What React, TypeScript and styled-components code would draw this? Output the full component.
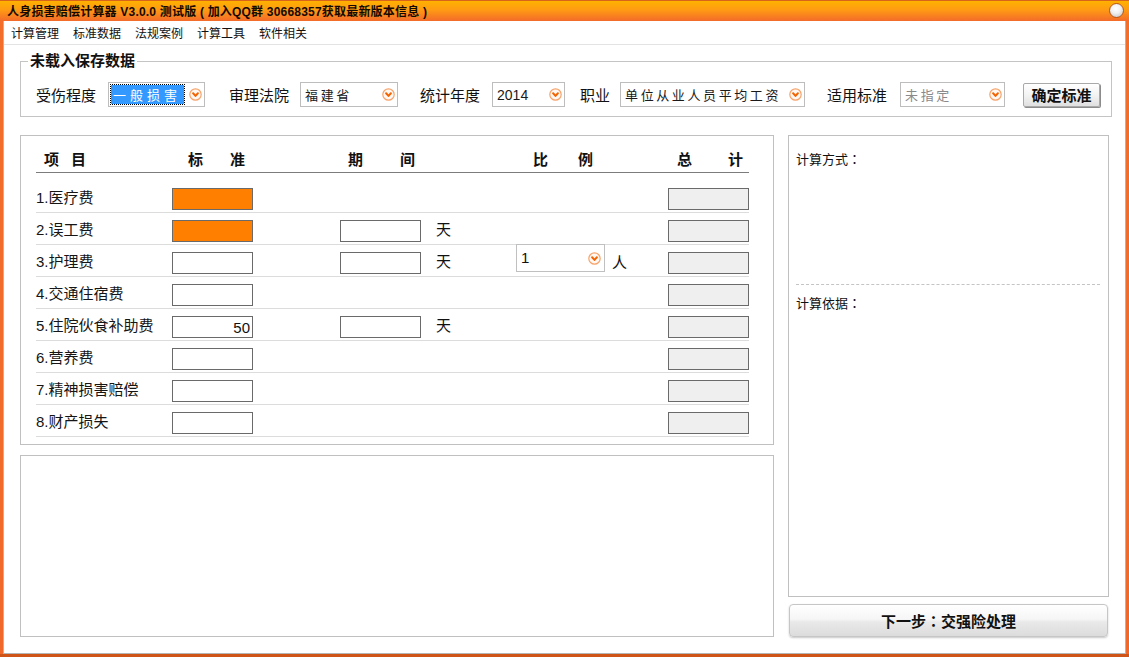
import React from 'react';
import styled, { createGlobalStyle } from 'styled-components';

const GlobalStyle = createGlobalStyle`
  html, body {
    margin: 0;
    padding: 0;
    background: #fff;
  }
  body {
    font-family: 'Liberation Sans', 'Noto Sans CJK SC', sans-serif;
    color: #111;
  }
  * {
    box-sizing: border-box;
  }
`;

const Window = styled.div`
  width: 1129px;
  height: 657px;
  display: flex;
  flex-direction: column;
  overflow: hidden;
  background: linear-gradient(
    to bottom,
    #f26e2a 0,
    #f0692a calc(100% - 3px),
    #cf5418 calc(100% - 3px)
  );
`;

const TitleBar = styled.header`
  flex: none;
  height: 21px;
  display: flex;
  align-items: center;
  justify-content: space-between;
  padding: 0 5px 0 7px;
  background: linear-gradient(
    to bottom,
    #d8641c 0,
    #d8641c 1px,
    #ffb100 1px,
    #ff9c12 45%,
    #f36b2b 100%
  );
`;

const Title = styled.h1`
  margin: 0;
  padding-top: 3px;
  font-size: 12px;
  line-height: 12px;
  font-weight: bold;
  letter-spacing: 0.2px;
  color: #140a00;
  white-space: nowrap;
`;

const CloseButton = styled.span`
  width: 15px;
  height: 15px;
  border-radius: 50%;
  border: 1px solid #b9561a;
  background: radial-gradient(circle at 45% 35%, #ffffff 0, #f2f2f2 40%, #bdbdbd 100%);
`;

const Client = styled.div`
  flex: 1;
  min-height: 0;
  margin: 0 3px 3px 3px;
  background: #fff;
  border: 1px solid #b4b4b4;
  border-top: none;
  display: flex;
  flex-direction: column;
`;

const MenuBar = styled.nav`
  flex: none;
  height: 24px;
  display: flex;
  align-items: center;
  gap: 14px;
  padding: 0 0 0 7px;
  border-bottom: 1px solid #e3e3e3;
`;

const MenuItem = styled.span`
  font-size: 12px;
  color: #111;
`;

const Content = styled.main`
  flex: 1;
  min-height: 0;
  display: flex;
  flex-direction: column;
  padding: 7px 13px 16px 16px;
`;

const GroupBox = styled.fieldset`
  margin: 0;
  min-width: 0;
  padding: 12px 0 9px 15px;
  border: 1px solid #c4c4c4;
`;

const Legend = styled.legend`
  margin-left: -8px;
  padding: 0 2px;
  font-size: 15px;
  line-height: 18px;
  font-weight: bold;
`;

const FilterRow = styled.div`
  display: flex;
  align-items: center;
  height: 25px;
`;

const Field = styled.label<{ $ml: number; $gap: number }>`
  display: flex;
  align-items: center;
  gap: ${p => p.$gap}px;
  margin-left: ${p => p.$ml}px;
  font-size: 15px;
  white-space: nowrap;
`;

const Select = styled.div<{ $w: number }>`
  width: ${p => p.$w}px;
  height: 25px;
  display: flex;
  align-items: center;
  justify-content: space-between;
  padding: 0 2px 0 2px;
  border: 1px solid #bdbdbd;
  background: #fff;
`;

const SelectText = styled.span<{ $muted?: boolean; $plain?: boolean }>`
  padding-left: 2px;
  font-size: ${p => (p.$plain ? 14 : 13)}px;
  letter-spacing: ${p => (p.$plain ? 0 : 2.6)}px;
  color: ${p => (p.$muted ? '#8a8a8a' : '#1a1a1a')};
  white-space: nowrap;
`;

const Highlight = styled.span`
  width: 73px;
  height: 19px;
  display: flex;
  align-items: center;
  padding-left: 2px;
  background: #3399ff;
  outline: 1px dotted #000;
  color: #fff;
  font-size: 13px;
  letter-spacing: 4px;
  white-space: nowrap;
`;

const ArrowIcon = styled.svg`
  flex: none;
  display: block;
`;

const ConfirmButton = styled.button`
  margin-left: 18px;
  width: 77px;
  height: 24px;
  padding: 0;
  font-family: inherit;
  font-size: 15px;
  font-weight: bold;
  color: #111;
  border: 1px solid #a9a9a9;
  border-radius: 2px;
  background: linear-gradient(to bottom, #ffffff 0, #f3f3f3 50%, #e0e0e0 100%);
  box-shadow: 1px 1px 0 #8c8c8c;
`;

const Main = styled.div`
  flex: 1;
  min-height: 0;
  margin: 18px 3px 0 0;
  display: grid;
  grid-template-columns: 754px 321px;
  column-gap: 14px;
`;

const Column = styled.div<{ $gap: number }>`
  min-height: 0;
  display: flex;
  flex-direction: column;
  gap: ${p => p.$gap}px;
`;

const Panel = styled.section`
  border: 1px solid #c0c0c0;
  background: #fff;
`;

const TablePanel = styled(Panel)`
  flex: none;
  height: 310px;
  padding: 15px 24px 7px 15px;
`;

const MemoPanel = styled(Panel)`
  flex: 1;
`;

const HeadRow = styled.div`
  display: flex;
  padding-bottom: 3px;
  border-bottom: 1px solid #7c7c7c;
  font-size: 15px;
  line-height: 18px;
  font-weight: bold;
`;

const HeadCell = styled.div<{ $ml: number; $w: number }>`
  display: flex;
  justify-content: space-between;
  margin-left: ${p => p.$ml}px;
  width: ${p => p.$w}px;
`;

const Rows = styled.div`
  margin-top: 8px;
`;

const ItemRow = styled.div`
  display: grid;
  grid-template-columns: 136px 81px 87px 81px 95px 152px 81px;
  align-items: center;
  height: 32px;
  padding: 7px 0 2px;
  border-bottom: 1px solid #dcdcdc;
  font-size: 15px;
  line-height: 18px;
`;

const ItemLabel = styled.span`
  margin-top: -2px;
  white-space: nowrap;
  color: #151515;
`;

const ValueBox = styled.input<{ $tone: 'white' | 'orange' | 'gray' }>`
  width: 81px;
  height: 22px;
  margin: 0;
  padding: 0 2px 0 2px;
  border: 1px solid #6a6a6a;
  border-radius: 0;
  outline: none;
  font-family: inherit;
  font-size: 15px;
  text-align: right;
  color: #111;
  background: ${p =>
    p.$tone === 'orange' ? '#ff8000' : p.$tone === 'gray' ? '#efefef' : '#fff'};
`;

const UnitCell = styled.span`
  margin-top: -2px;
  padding-left: 15px;
`;

const RatioCell = styled.div`
  align-self: stretch;
  display: flex;
  align-items: flex-start;
  gap: 7px;
`;

const RatioSelect = styled.div`
  width: 89px;
  height: 28px;
  margin-top: -8px;
  display: flex;
  align-items: center;
  justify-content: space-between;
  padding: 0 3px 0 4px;
  border: 1px solid #c0c0c0;
  background: #fff;
  font-size: 15px;
`;

const PersonUnit = styled.span`
  align-self: center;
`;

const InfoPanel = styled(Panel)`
  flex: 1;
  padding: 14px 8px 0 7px;
  font-size: 13px;
  line-height: 18px;
`;

const InfoSection = styled.div`
  height: 135px;
  border-bottom: 1px dashed #c4c4c4;
`;

const InfoLabel = styled.div<{ $mt?: number }>`
  margin-top: ${p => p.$mt ?? 0}px;
`;

const Colon = styled.span`
  font-family: 'Noto Sans CJK JP', sans-serif;
`;

const NextButton = styled.button`
  flex: none;
  height: 33px;
  margin: 0 1px;
  padding: 0;
  font-family: inherit;
  font-size: 15px;
  font-weight: bold;
  color: #111;
  border: 1px solid #c6c6c6;
  border-radius: 4px;
  background: linear-gradient(to bottom, #ffffff 0, #f6f6f6 45%, #e9e9e9 55%, #dcdcdc 100%);
  box-shadow: 0 1px 2px rgba(0, 0, 0, 0.22);
`;

const Arrow = () => (
  <ArrowIcon viewBox="0 0 13 13" width={13} height={13}>
    <circle cx="6.5" cy="6.5" r="5.7" fill="#fff8f2" stroke="#f6a46c" strokeWidth="1.2" />
    <path
      d="M4.1 5.3 L6.5 7.9 L8.9 5.3"
      fill="none"
      stroke="#f26400"
      strokeWidth="2"
      strokeLinecap="round"
      strokeLinejoin="round"
    />
  </ArrowIcon>
);

const menu = ['计算管理', '标准数据', '法规案例', '计算工具', '软件相关'];

type Filter = {
  label: string;
  w: number;
  ml: number;
  gap: number;
  value: string;
  kind: 'selected' | 'kai' | 'plain' | 'muted';
};

const filters: Filter[] = [
  { label: '受伤程度', w: 97, ml: 0, gap: 12, value: '一般损害', kind: 'selected' },
  { label: '审理法院', w: 98, ml: 24, gap: 11, value: '福建省', kind: 'kai' },
  { label: '统计年度', w: 73, ml: 22, gap: 12, value: '2014', kind: 'plain' },
  { label: '职业', w: 185, ml: 15, gap: 10, value: '单位从业人员平均工资', kind: 'kai' },
  { label: '适用标准', w: 105, ml: 22, gap: 13, value: '未指定', kind: 'muted' },
];

const heads = [
  { chars: ['项', '目'], ml: 8, w: 42 },
  { chars: ['标', '准'], ml: 102, w: 57 },
  { chars: ['期', '间'], ml: 103, w: 67 },
  { chars: ['比', '例'], ml: 118, w: 60 },
  { chars: ['总', '计'], ml: 84, w: 66 },
];

type Item = {
  label: string;
  tone?: 'white' | 'orange';
  value?: string;
  period?: boolean;
  ratio?: boolean;
};

const items: Item[] = [
  { label: '1.医疗费', tone: 'orange' },
  { label: '2.误工费', tone: 'orange', period: true },
  { label: '3.护理费', period: true, ratio: true },
  { label: '4.交通住宿费' },
  { label: '5.住院伙食补助费', value: '50', period: true },
  { label: '6.营养费' },
  { label: '7.精神损害赔偿' },
  { label: '8.财产损失' },
];

const renderSelectValue = (f: Filter) => {
  if (f.kind === 'selected') return <Highlight>{f.value}</Highlight>;
  return (
    <SelectText $muted={f.kind === 'muted'} $plain={f.kind === 'plain'}>
      {f.value}
    </SelectText>
  );
};

export default function App() {
  return (
    <>
      <GlobalStyle />
      <Window>
        <TitleBar>
          <Title>人身损害赔偿计算器 V3.0.0 测试版 ( 加入QQ群 30668357获取最新版本信息 )</Title>
          <CloseButton />
        </TitleBar>
        <Client>
          <MenuBar>
            {menu.map(m => (
              <MenuItem key={m}>{m}</MenuItem>
            ))}
          </MenuBar>
          <Content>
            <GroupBox>
              <Legend>未载入保存数据</Legend>
              <FilterRow>
                {filters.map(f => (
                  <Field key={f.label} $ml={f.ml} $gap={f.gap}>
                    {f.label}
                    <Select $w={f.w}>
                      {renderSelectValue(f)}
                      <Arrow />
                    </Select>
                  </Field>
                ))}
                <ConfirmButton>确定标准</ConfirmButton>
              </FilterRow>
            </GroupBox>

            <Main>
              <Column $gap={10}>
                <TablePanel>
                  <HeadRow>
                    {heads.map(h => (
                      <HeadCell key={h.chars[0]} $ml={h.ml} $w={h.w}>
                        <span>{h.chars[0]}</span>
                        <span>{h.chars[1]}</span>
                      </HeadCell>
                    ))}
                  </HeadRow>
                  <Rows>
                    {items.map(it => (
                      <ItemRow key={it.label}>
                        <ItemLabel>{it.label}</ItemLabel>
                        <ValueBox $tone={it.tone ?? 'white'} readOnly value={it.value ?? ''} />
                        <span />
                        {it.period ? <ValueBox $tone="white" readOnly value="" /> : <span />}
                        {it.period ? <UnitCell>天</UnitCell> : <span />}
                        {it.ratio ? (
                          <RatioCell>
                            <RatioSelect>
                              <span>1</span>
                              <Arrow />
                            </RatioSelect>
                            <PersonUnit>人</PersonUnit>
                          </RatioCell>
                        ) : (
                          <span />
                        )}
                        <ValueBox $tone="gray" readOnly value="" />
                      </ItemRow>
                    ))}
                  </Rows>
                </TablePanel>
                <MemoPanel />
              </Column>

              <Column $gap={7}>
                <InfoPanel>
                  <InfoSection>
                    <InfoLabel>
                      计算方式<Colon>：</Colon>
                    </InfoLabel>
                  </InfoSection>
                  <InfoLabel $mt={9}>
                    计算依据<Colon>：</Colon>
                  </InfoLabel>
                </InfoPanel>
                <NextButton>
                  下一步<Colon>：</Colon>交强险处理
                </NextButton>
              </Column>
            </Main>
          </Content>
        </Client>
      </Window>
    </>
  );
}
